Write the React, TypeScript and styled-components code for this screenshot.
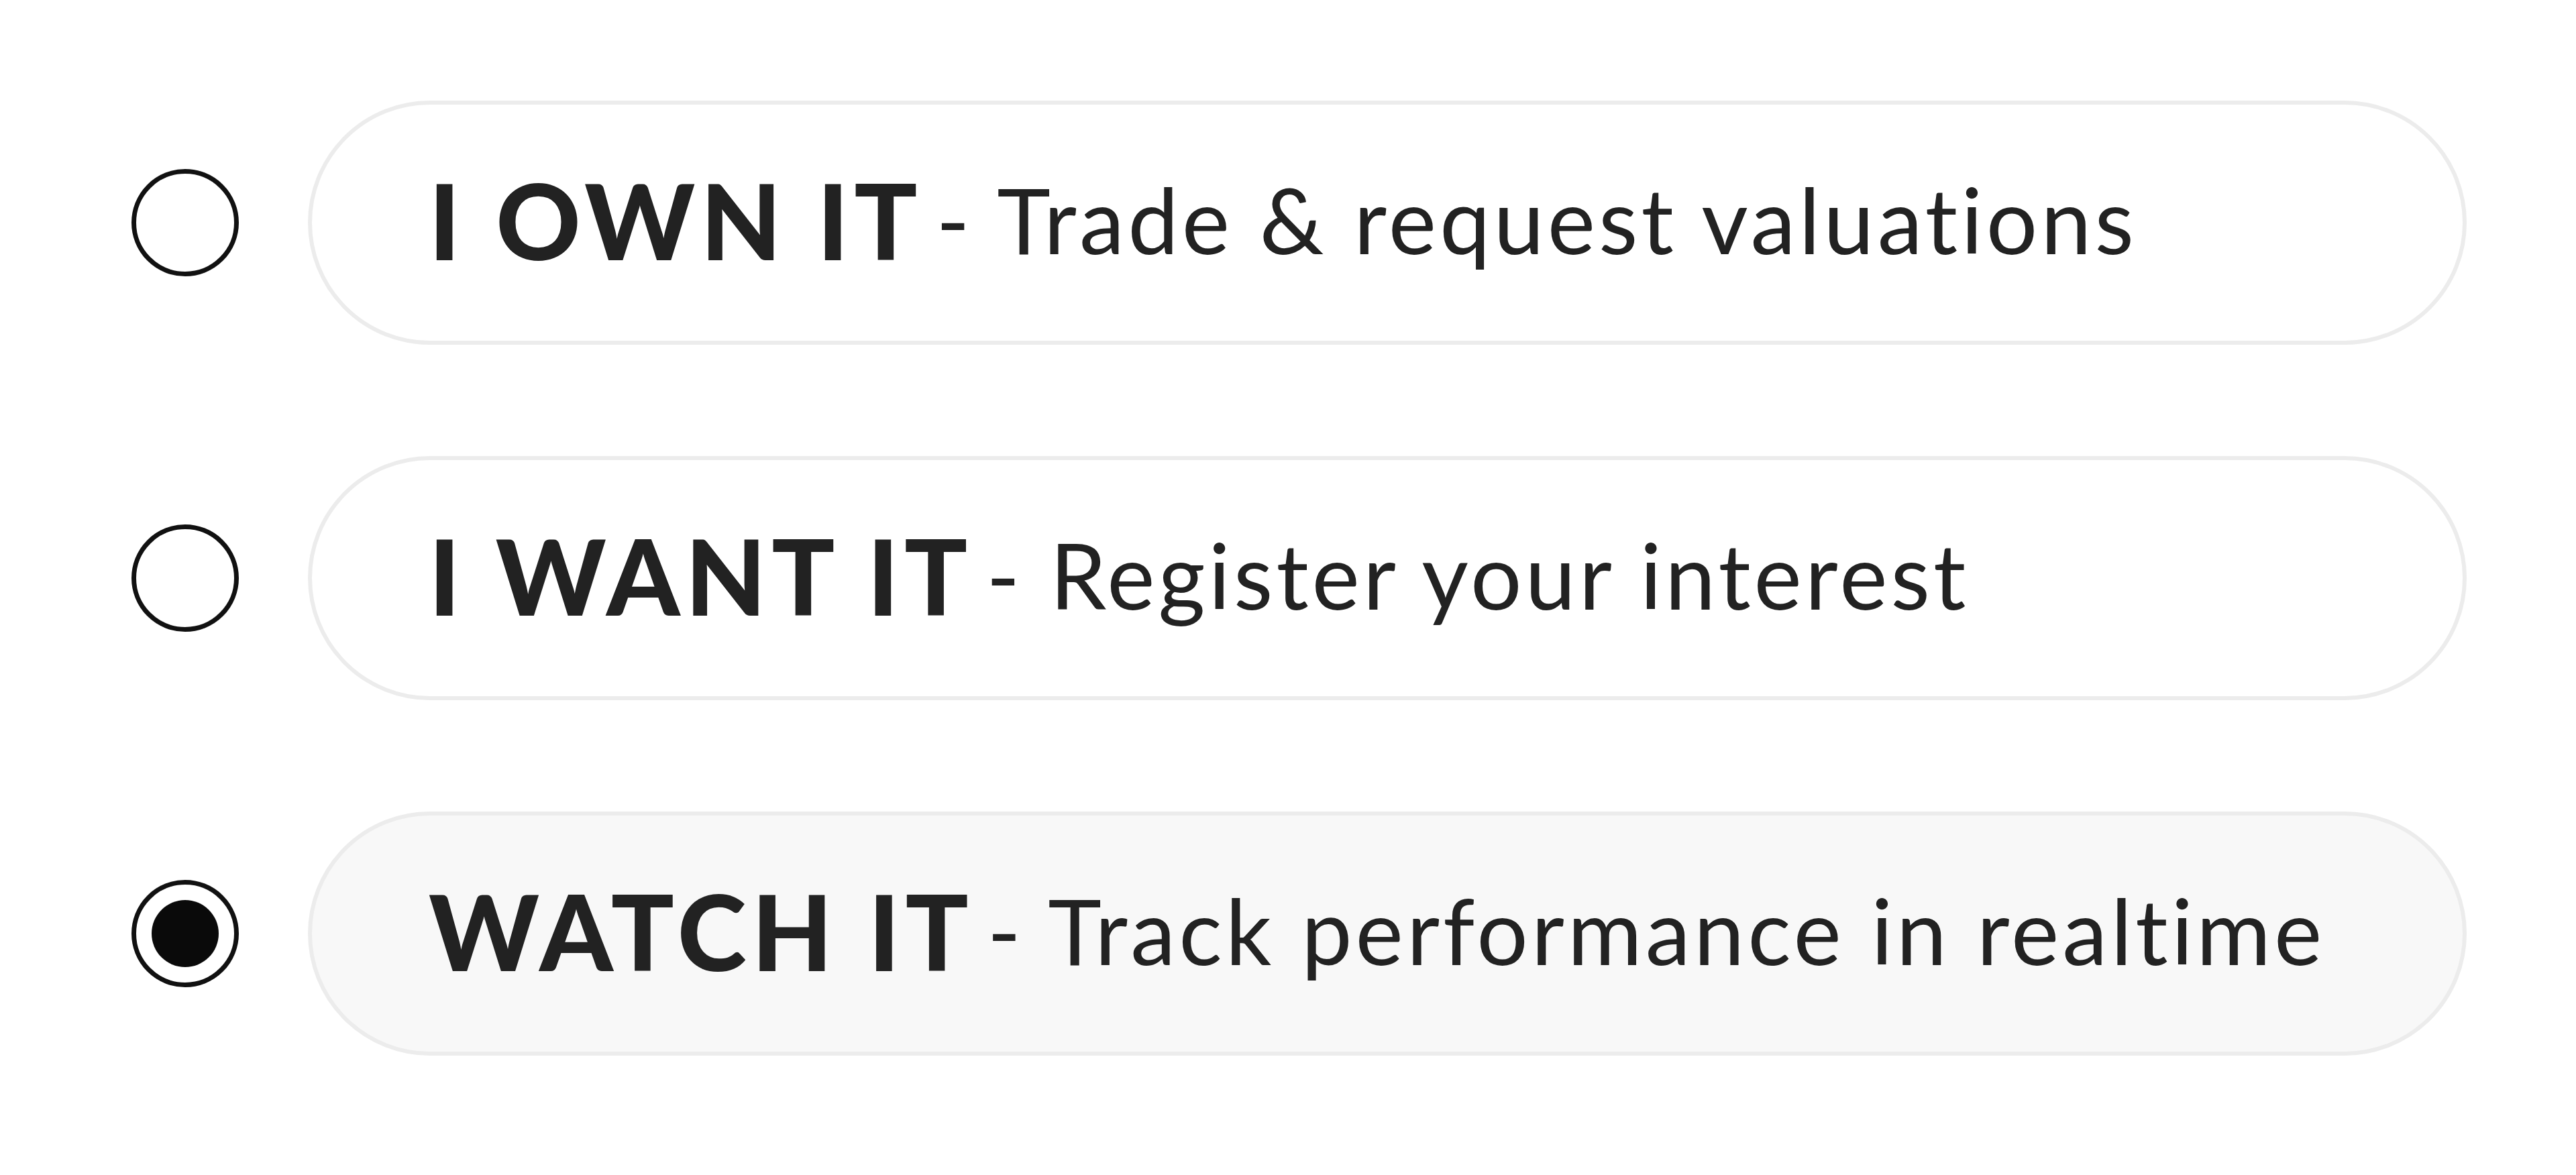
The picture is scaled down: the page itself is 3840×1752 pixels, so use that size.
import React, { FC } from 'react'
import styled, { createGlobalStyle } from 'styled-components'

const GlobalStyle = createGlobalStyle`
  html, body {
    margin: 0;
    padding: 0;
    background-color: #fff;
  }
`

const StyleList = styled.div`
  display: flex;
  flex-direction: column;
  gap: 166px;
  box-sizing: border-box;
  min-height: 100vh;
  padding: 150px 163px 0 196px;
  background-color: #fff;
`

const StyleOption = styled.label`
  display: flex;
  flex-direction: row;
  align-items: center;
  gap: 103px;
  cursor: pointer;
`

const StyleRadio = styled.span<{ $checked: boolean }>`
  flex: none;
  display: flex;
  justify-content: center;
  align-items: center;
  box-sizing: border-box;
  width: 160px;
  height: 160px;
  border: 7px solid #111;
  border-radius: 50%;
  background-color: #fff;

  &::after {
    content: '';
    display: ${({ $checked }) => ($checked ? 'block' : 'none')};
    width: 100px;
    height: 100px;
    border-radius: 50%;
    background-color: #0a0a0a;
  }
`

const StylePill = styled.div<{ $checked: boolean }>`
  flex: 1;
  display: flex;
  flex-direction: row;
  align-items: center;
  box-sizing: border-box;
  height: 364px;
  padding: 0 0 10px 174px;
  border: 6px solid #ececec;
  border-radius: 999px;
  background-color: ${({ $checked }) => ($checked ? '#f8f8f8' : '#fff')};
  white-space: nowrap;
  font-variant-ligatures: none;
`

const StyleTitle = styled.span`
  color: #222;
  font-family: Lato, 'Liberation Sans', sans-serif;
  font-weight: 900;
  font-size: 156px;
  letter-spacing: 8px;
`

const StyleText = styled.span`
  margin-left: 20px;
  color: #222;
  font-family: Lato, 'Liberation Sans', sans-serif;
  font-weight: 400;
  font-size: 135px;
  letter-spacing: 5px;
`

const options = [
  { title: 'I OWN IT', text: 'Trade & request valuations' },
  { title: 'I WANT IT', text: 'Register your interest' },
  { title: 'WATCH IT', text: 'Track performance in realtime' },
]

const App: FC = () => {
  const selected = 2

  return (
    <>
      <GlobalStyle />
      <StyleList>
        {options.map((option, i) => (
          <StyleOption key={option.title}>
            <StyleRadio $checked={i === selected} />
            <StylePill $checked={i === selected}>
              <StyleTitle>{option.title}</StyleTitle>
              <StyleText>- {option.text}</StyleText>
            </StylePill>
          </StyleOption>
        ))}
      </StyleList>
    </>
  )
}

export default App
